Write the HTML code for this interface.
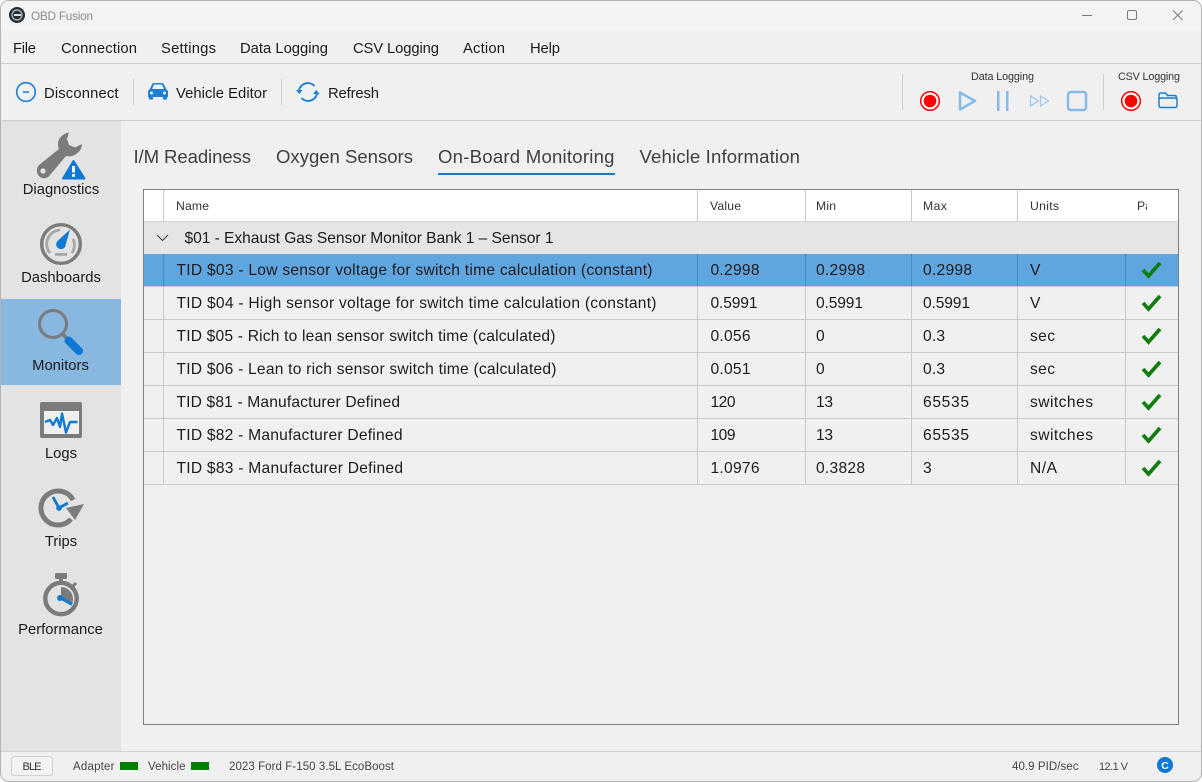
<!DOCTYPE html>
<html><head><meta charset="utf-8"><title>OBD Fusion</title>
<style>
html,body{margin:0;padding:0;background:#fff;overflow:hidden}
svg{display:block}
text{font-family:"Liberation Sans",sans-serif;fill:#1c1c1c}
.m{font-size:14.800px}
.t{font-size:18.600px;fill:#404040}
.c{font-size:15.6px}
.h{font-size:12.2px;fill:#333}
.s{font-size:11.5px;fill:#444}
.n{font-size:14.800px;text-anchor:middle}
</style></head><body>
<svg xmlns="http://www.w3.org/2000/svg" width="1202" height="782" viewBox="0 0 1202 782">
<rect x="0.5" y="0.5" width="1201" height="781" rx="8" fill="#f0f0f0" stroke="#b4b4b4"/>
<path d="M1 31V9a8 8 0 0 1 8-8H1193a8 8 0 0 1 8 8V31Z" fill="#f3f3f3"/>
<rect x="1" y="63" width="1200" height="1" fill="#cdcdcd"/>
<rect x="1" y="120" width="1200" height="1" fill="#cdcdcd"/>
<rect x="1" y="121" width="120" height="630" fill="#e3e3e3"/>
<rect x="1" y="299" width="120" height="86" fill="#88b7e0"/>
<rect x="1" y="751" width="1200" height="1" fill="#d2d2d2"/>

<!-- title bar -->
<circle cx="17" cy="15" r="8" fill="#2a2a2a"/><circle cx="17" cy="15" r="5" fill="none" stroke="#9fb6c8" stroke-width="1.4"/><rect x="14" y="14" width="7" height="2" fill="#d8e4ee"/>
<text x="31" y="20" font-size="11.800" style="fill:#8c8c8c" textLength="62">OBD Fusion</text>
<rect x="1082" y="15" width="10" height="1" fill="#7a7a7a"/>
<rect x="1127.500" y="10.500" width="9" height="9" rx="1.500" fill="none" stroke="#7a7a7a"/>
<path d="M1173 10.500l9.500 9.500M1182.500 10.500l-9.500 9.500" stroke="#7a7a7a" fill="none"/>

<!-- menu -->
<text class="m" x="13" y="53" textLength="23">File</text>
<text class="m" x="61" y="53" textLength="76">Connection</text>
<text class="m" x="161" y="53" textLength="55">Settings</text>
<text class="m" x="240" y="53" textLength="88">Data Logging</text>
<text class="m" x="353" y="53" textLength="86">CSV Logging</text>
<text class="m" x="463" y="53" textLength="42">Action</text>
<text class="m" x="530" y="53" textLength="30">Help</text>

<!-- toolbar -->
<circle cx="26" cy="92" r="9.300" fill="none" stroke="#1a7fd6" stroke-width="1.600"/><rect x="23" y="91.300" width="6" height="1.500" fill="#1a7fd6"/>
<text class="m" x="44" y="98" textLength="74.500">Disconnect</text>
<rect x="133" y="79" width="1" height="26" fill="#cfcfcf"/>
<path d="M148 97v-6l1.500-1.500 2.500-5q.7-1.500 2.500-1.500h7q1.800 0 2.500 1.500l2.500 5 1.500 1.500v6h-1v2.500h-4V97h-10v2.500h-4V97Z" fill="#1a7fd6"/>
<path d="M152 89l1.800-3.800q.3-.7 1-.7h6.400q.7 0 1 .7l1.800 3.800Z" fill="#f0f0f0"/><circle cx="151.500" cy="93" r="1.500" fill="#f0f0f0"/><circle cx="164.500" cy="93" r="1.500" fill="#f0f0f0"/>
<text class="m" x="176" y="98" textLength="91">Vehicle Editor</text>
<rect x="281" y="79" width="1" height="26" fill="#cfcfcf"/>
<path d="M299 90.500a9 9 0 0 1 15.500-4.500M317 93.500a9 9 0 0 1-15.500 4.500" fill="none" stroke="#1a7fd6" stroke-width="2"/>
<path d="M296 90h6.500l-3.200 4ZM319.500 94h-6.500l3.200-4Z" fill="#1a7fd6"/>
<text class="m" x="328" y="98" textLength="51">Refresh</text>

<rect x="902" y="74" width="1" height="36" fill="#cfcfcf"/>
<rect x="1103" y="74" width="1" height="36" fill="#cfcfcf"/>
<text x="971" y="80" font-size="10.800" style="fill:#333" textLength="63">Data Logging</text>
<text x="1118" y="80" font-size="10.800" style="fill:#333" textLength="62">CSV Logging</text>
<circle cx="930" cy="101" r="9.300" fill="#fff" stroke="#f00" stroke-width="1.500"/><circle cx="930" cy="101" r="6.300" fill="#f00"/>
<path d="M960 92.500v17l15-8.500Z" fill="none" stroke="#86bae8" stroke-width="2.500" stroke-linejoin="round"/>
<rect x="997" y="91" width="2.500" height="20" fill="#86bae8"/><rect x="1006" y="91" width="2.500" height="20" fill="#86bae8"/>
<path d="M1030.500 96v10l8-5ZM1040.500 96v10l8-5Z" fill="none" stroke="#a0c8ec" stroke-width="1.200"/>
<rect x="1068" y="92" width="18" height="18" rx="2.500" fill="none" stroke="#86bae8" stroke-width="2.500"/>
<circle cx="1131" cy="101" r="9.300" fill="#fff" stroke="#f00" stroke-width="1.500"/><circle cx="1131" cy="101" r="6.300" fill="#f00"/>
<path d="M1159 99v-4q0-2 2-2h4.500l2 2.500h7q2 0 2 2v2" fill="none" stroke="#1a7fd6" stroke-width="1.500"/>
<rect x="1159" y="98" width="18" height="9.500" rx="2" fill="none" stroke="#1a7fd6" stroke-width="1.500"/>

<!-- sidebar: Diagnostics -->
<path d="M69 132.500C60 134 56 142 59 149L39 165C36 168 36 174 40 177C44 179.500 48 178 50 175L66 156C73 158 82 152 82 144L75 147.500L69 145L67 139Z" fill="#7b7b7b"/>
<circle cx="43" cy="171" r="2.600" fill="#e3e3e3"/>
<path d="M73.500 161L84.500 178.500H63Z" fill="#0f78d4" stroke="#0f78d4" stroke-width="2" stroke-linejoin="round"/>
<rect x="72" y="166" width="3" height="6.500" fill="#fff"/><rect x="72" y="174" width="3" height="2.800" fill="#fff"/>
<text class="n" x="61" y="194">Diagnostics</text>

<!-- Dashboards -->
<circle cx="61" cy="244" r="19.300" fill="none" stroke="#7b7b7b" stroke-width="3.400"/>
<path d="M50 253a14 14 0 0 1 10-23" fill="none" stroke="#a8a8a8" stroke-width="2.800"/>
<path d="M72 253a14 14 0 0 0 1-14" fill="none" stroke="#a8a8a8" stroke-width="2.800"/>
<rect x="55" y="253" width="12" height="2.800" fill="#a8a8a8"/>
<path d="M70 229.500L65 247A4.800 4.800 0 1 1 57 241.500Z" fill="#0f78d4"/>
<text class="n" x="61" y="282">Dashboards</text>

<!-- Monitors -->
<circle cx="53" cy="324" r="13.500" fill="none" stroke="#7b7b7b" stroke-width="3"/>
<path d="M62.500 334l4 4" stroke="#7b7b7b" stroke-width="3.500"/>
<path d="M68.500 340.500L79 351" stroke="#0f78d4" stroke-width="8" stroke-linecap="round"/>
<text class="n" x="60.500" y="370">Monitors</text>

<!-- Logs -->
<rect x="40" y="402" width="42" height="36" rx="2" fill="#7b7b7b"/>
<rect x="44" y="411" width="35" height="23" fill="#efefef"/>
<path d="M45 422L50 420L53 425L57 418L60 427L62 413.500L66 432.500L70 422H77.500" fill="none" stroke="#0f78d4" stroke-width="2.400" stroke-linejoin="round"/>
<text class="n" x="61" y="458">Logs</text>

<!-- Trips -->
<path d="M73 500A17 17 0 1 0 71 519" fill="none" stroke="#7b7b7b" stroke-width="5"/>
<path d="M84 504L75 520L66 508Z" fill="#7b7b7b"/>
<path d="M53 497L59 508L68 503" fill="none" stroke="#0f78d4" stroke-width="2.800"/><circle cx="59" cy="508" r="2.800" fill="#0f78d4"/>
<text class="n" x="61" y="546">Trips</text>

<!-- Performance -->
<rect x="55" y="573" width="12" height="6" rx="1.500" fill="#7b7b7b"/><rect x="59" y="578" width="4" height="4" fill="#7b7b7b"/>
<path d="M73 586l3-3" stroke="#7b7b7b" stroke-width="3"/>
<circle cx="61" cy="598.500" r="15.700" fill="none" stroke="#7b7b7b" stroke-width="4.400"/>
<path d="M61 587a12 12 0 0 1 12 12q0 3-1 5l-11-6Z" fill="#7b7b7b"/>
<path d="M60 597.500l12 7" stroke="#0f78d4" stroke-width="3"/><circle cx="60" cy="598" r="3" fill="#0f78d4"/>
<text class="n" x="60.500" y="634">Performance</text>

<!-- tabs -->
<text class="t" x="133.500" y="163" textLength="117.500">I/M Readiness</text>
<text class="t" x="276" y="163" textLength="137">Oxygen Sensors</text>
<text class="t" x="438" y="163" textLength="176.500">On-Board Monitoring</text>
<text class="t" x="639.500" y="163" textLength="160.500">Vehicle Information</text>
<rect x="438" y="173" width="177" height="2" fill="#0f78d4"/>

<!-- table -->
<rect x="143.500" y="189.500" width="1035" height="535" fill="#f0f0f0" stroke="#808080"/>
<rect x="144" y="190" width="1034" height="31" fill="#fff"/>
<rect x="144" y="221" width="1034" height="1" fill="#d4d4d4"/>
<rect x="144" y="222" width="1034" height="32" fill="#e5e5e5"/>
<rect x="144" y="254" width="1034" height="32" fill="#5fa5e0"/>
<g fill="#c8c8c8">
<rect x="144" y="286" width="1034" height="1"/><rect x="144" y="319" width="1034" height="1"/><rect x="144" y="352" width="1034" height="1"/><rect x="144" y="385" width="1034" height="1"/><rect x="144" y="418" width="1034" height="1"/><rect x="144" y="451" width="1034" height="1"/><rect x="144" y="484" width="1034" height="1"/>
<rect x="163" y="190" width="1" height="31"/><rect x="697" y="190" width="1" height="31"/><rect x="805" y="190" width="1" height="31"/><rect x="911" y="190" width="1" height="31"/><rect x="1017" y="190" width="1" height="31"/>
<rect x="163" y="287" width="1" height="198"/><rect x="697" y="287" width="1" height="198"/><rect x="805" y="287" width="1" height="198"/><rect x="911" y="287" width="1" height="198"/><rect x="1017" y="287" width="1" height="198"/><rect x="1125" y="287" width="1" height="198"/>
</g>
<g fill="#4b88bd">
<rect x="163" y="254" width="1" height="32"/><rect x="697" y="254" width="1" height="32"/><rect x="805" y="254" width="1" height="32"/><rect x="911" y="254" width="1" height="32"/><rect x="1017" y="254" width="1" height="32"/><rect x="1125" y="254" width="1" height="32"/>
</g>

<text class="h" x="176" y="210" textLength="33">Name</text>
<text class="h" x="710" y="210" textLength="31">Value</text>
<text class="h" x="816" y="210" textLength="20">Min</text>
<text class="h" x="923" y="210" textLength="24">Max</text>
<text class="h" x="1030" y="210" textLength="29">Units</text>
<text class="h" x="1137" y="210">Pa</text>
<rect x="1147" y="198" width="10" height="16" fill="#fff"/>

<path d="M157 235l5.500 5.500 5.500-5.500" fill="none" stroke="#444" stroke-width="1.100"/>
<text class="c" x="184.500" y="243" textLength="369">$01 - Exhaust Gas Sensor Monitor Bank 1 – Sensor 1</text>

<text class="c" x="176.500" y="275" textLength="476">TID $03 - Low sensor voltage for switch time calculation (constant)</text>
<text class="c" x="710.500" y="275" textLength="49">0.2998</text><text class="c" x="816" y="275" textLength="49">0.2998</text><text class="c" x="923" y="275" textLength="49">0.2998</text><text class="c" x="1030" y="275" textLength="10">V</text>

<text class="c" x="176.500" y="308" textLength="480">TID $04 - High sensor voltage for switch time calculation (constant)</text>
<text class="c" x="710.500" y="308" textLength="47">0.5991</text><text class="c" x="816" y="308" textLength="47">0.5991</text><text class="c" x="923" y="308" textLength="47">0.5991</text><text class="c" x="1030" y="308" textLength="10">V</text>

<text class="c" x="176.500" y="341" textLength="379">TID $05 - Rich to lean sensor switch time (calculated)</text>
<text class="c" x="710.500" y="341" textLength="40">0.056</text><text class="c" x="816" y="341" textLength="9">0</text><text class="c" x="923" y="341" textLength="22">0.3</text><text class="c" x="1030" y="341" textLength="25">sec</text>

<text class="c" x="176.500" y="374" textLength="380">TID $06 - Lean to rich sensor switch time (calculated)</text>
<text class="c" x="710.500" y="374" textLength="40">0.051</text><text class="c" x="816" y="374" textLength="9">0</text><text class="c" x="923" y="374" textLength="22">0.3</text><text class="c" x="1030" y="374" textLength="25">sec</text>

<text class="c" x="176.500" y="407" textLength="223.500">TID $81 - Manufacturer Defined</text>
<text class="c" x="710.500" y="407" textLength="25">120</text><text class="c" x="816" y="407" textLength="17">13</text><text class="c" x="923" y="407" textLength="46">65535</text><text class="c" x="1030" y="407" textLength="63">switches</text>

<text class="c" x="176.500" y="440" textLength="226">TID $82 - Manufacturer Defined</text>
<text class="c" x="710.500" y="440" textLength="25">109</text><text class="c" x="816" y="440" textLength="17">13</text><text class="c" x="923" y="440" textLength="46">65535</text><text class="c" x="1030" y="440" textLength="63">switches</text>

<text class="c" x="176.500" y="473" textLength="226.500">TID $83 - Manufacturer Defined</text>
<text class="c" x="710.500" y="473" textLength="49">1.0976</text><text class="c" x="816" y="473" textLength="49">0.3828</text><text class="c" x="923" y="473" textLength="9">3</text><text class="c" x="1030" y="473" textLength="27">N/A</text>

<g fill="none" stroke="#0a7d0a" stroke-width="3.600">
<path d="M1143 270l5.500 6 11.500-13"/>
<path d="M1143 303l5.500 6 11.500-13"/>
<path d="M1143 336l5.500 6 11.500-13"/>
<path d="M1143 369l5.500 6 11.500-13"/>
<path d="M1143 402l5.500 6 11.500-13"/>
<path d="M1143 435l5.500 6 11.500-13"/>
<path d="M1143 468l5.500 6 11.500-13"/>
</g>

<!-- status -->
<rect x="11.500" y="756.500" width="41" height="19" rx="3" fill="#f3f3f3" stroke="#d2d2d2"/>
<text x="22.500" y="770" font-size="11" textLength="19" style="fill:#333">BLE</text>
<text class="s" x="73" y="770" textLength="41.500">Adapter</text>
<rect x="120" y="762" width="18" height="8" fill="#008000"/>
<text class="s" x="148" y="770" textLength="37.500">Vehicle</text>
<rect x="191" y="762" width="18" height="8" fill="#008000"/>
<text class="s" x="229" y="770" textLength="165">2023 Ford F-150 3.5L EcoBoost</text>
<text class="s" x="1012" y="770" textLength="66.500">40.9 PID/sec</text>
<text x="1099" y="770" font-size="11" style="fill:#444" textLength="29">12.1 V</text>
<circle cx="1165" cy="765" r="8" fill="#0f78d4"/>
<text x="1165" y="769" font-size="10.500" font-weight="bold" text-anchor="middle" style="fill:#fff">C</text>
</svg>
</body></html>
